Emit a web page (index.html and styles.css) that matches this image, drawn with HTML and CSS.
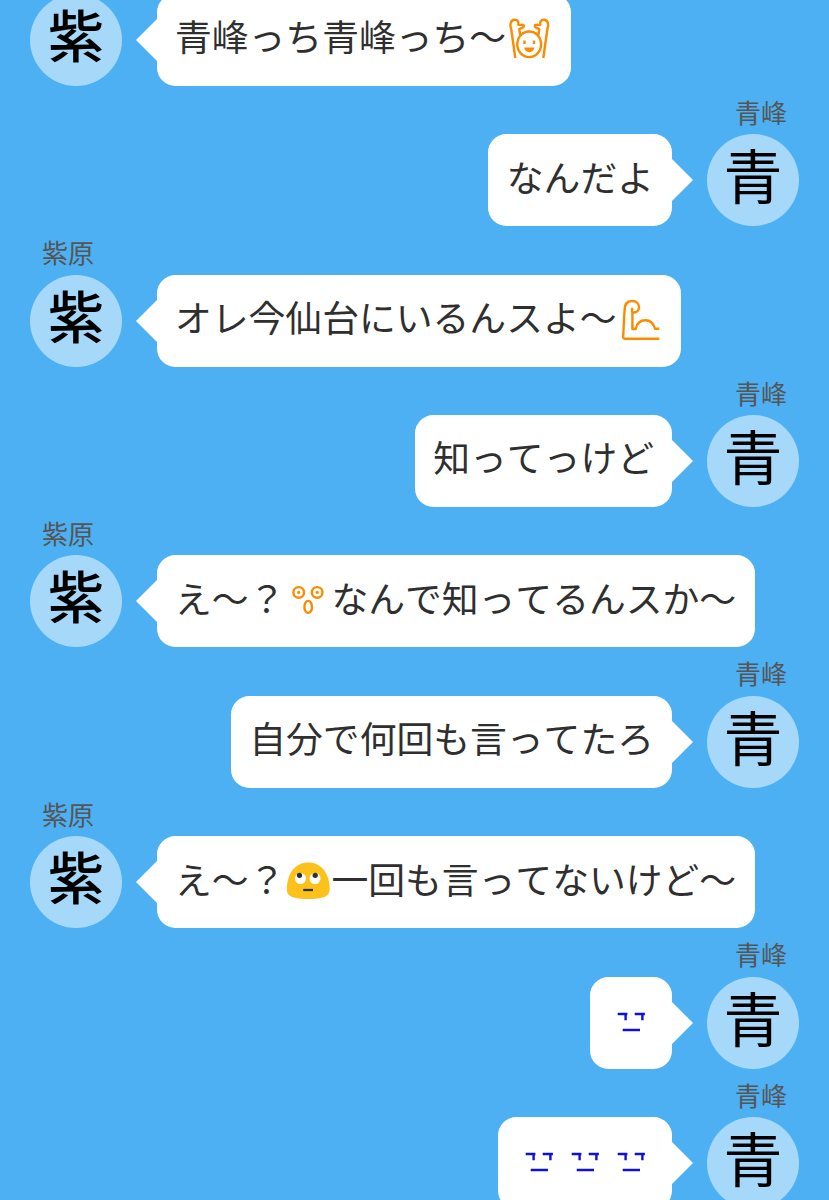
FILE: index.html
```html
<!DOCTYPE html>
<html lang="ja">
<head>
    <meta charset="UTF-8">
    <meta name="viewport" content="width=device-width, initial-scale=1.0">
    <title>トーク</title>
    <link rel="stylesheet" href="styles.css">
</head>
<body>
    <!-- emoji shapes -->
    <svg class="defs">
        <symbol id="hands-up" viewBox="0 0 46 46">
            <g class="line orange">
                <ellipse cx="23.2" cy="27.3" rx="11.9" ry="12.8"/>
                <path d="M9.3 41 5.2 12C3.5 8 4.5 2.9 8.5 2.7 11.5 2.5 13 4.5 12.3 7.5 13.5 8.6 15.5 7 17.8 8.3 18.5 10.5 15.5 11.3 13.3 12L14.3 18.5"/>
                <path d="M37.3 41 41.4 12C43.1 8 42.1 2.9 38.1 2.7 35.1 2.5 33.6 4.5 34.3 7.5 33.1 8.6 31.1 7 28.8 8.3 28.1 10.5 31.1 11.3 33.3 12L32.3 18.5"/>
                <path d="M18.5 23.5v3.5M28 23.5v3.5"/>
            </g>
            <path class="solid orange" d="M18.3 30.5h10a5 4.7 0 0 1-10 0z"/>
        </symbol>
        <symbol id="muscle" viewBox="0 0 46 46">
            <path class="line orange" d="M42.3 40.7H8.3Q6 40.7 6.2 38.3L7.5 13C7.5 6 10.5 3 15 3c4.500 0 7 2.800 7 6 0 3.500-2.500 5.500-5 5.500-2 0-3-2-1.300-4.500M15.400 13.500V31h3.300C20 25 24 22.300 28.300 22.300S36.500 25 38 30.800h4.300"/>
        </symbol>
        <symbol id="astonished" viewBox="0 0 46 46">
            <g class="line orange">
                <circle cx="13.7" cy="14.4" r="5.3"/>
                <circle cx="32.2" cy="14.4" r="5.3"/>
                <ellipse cx="23.2" cy="28.9" rx="3.8" ry="6"/>
            </g>
            <g class="solid orange">
                <circle cx="13.7" cy="14.4" r="1.6"/>
                <circle cx="32.2" cy="14.4" r="1.6"/>
            </g>
        </symbol>
        <symbol id="rolling-eyes" viewBox="0 0 46 46">
            <path fill="#fcc21b" d="M23.2 3.4C36 3.4 44.7 14 44.7 30.5 44.7 37.5 38 40 23.2 40S1.8 37.5 1.8 30.5C1.8 14 10.5 3.4 23.2 3.4z"/>
            <circle cx="15.5" cy="19.5" r="5.5" fill="#fff"/>
            <circle cx="30" cy="19.5" r="5.5" fill="#fff"/>
            <circle cx="14.5" cy="16.3" r="2.6" fill="#2f2f2f"/>
            <circle cx="30.2" cy="16.3" r="2.6" fill="#2f2f2f"/>
            <path d="M18.2 31H28" stroke="#2f2f2f" stroke-width="2.3"/>
        </symbol>
        <symbol id="deadpan" viewBox="0 0 46 46">
            <path class="line blue" d="M9.7 14h9.7M17.6 14v6.200M26.700 14h10.200M34.400 14v6.200M14.700 30H32"/>
        </symbol>
    </svg>

    <div class="chat">
        <div class="message left">
            <div class="row">
                <div class="avatar">紫</div>
                <div class="bubble">青峰っち青峰っち〜<svg class="emoji"><use href="#hands-up"/></svg></div>
            </div>
        </div>
        <div class="message right">
            <div class="name">青峰</div>
            <div class="row">
                <div class="avatar">青</div>
                <div class="bubble">なんだよ</div>
            </div>
        </div>
        <div class="message left">
            <div class="name">紫原</div>
            <div class="row">
                <div class="avatar">紫</div>
                <div class="bubble">オレ今仙台にいるんスよ〜<svg class="emoji"><use href="#muscle"/></svg></div>
            </div>
        </div>
        <div class="message right">
            <div class="name">青峰</div>
            <div class="row">
                <div class="avatar">青</div>
                <div class="bubble">知ってっけど</div>
            </div>
        </div>
        <div class="message left">
            <div class="name">紫原</div>
            <div class="row">
                <div class="avatar">紫</div>
                <div class="bubble">え〜？<svg class="emoji"><use href="#astonished"/></svg>なんで知ってるんスか〜</div>
            </div>
        </div>
        <div class="message right">
            <div class="name">青峰</div>
            <div class="row">
                <div class="avatar">青</div>
                <div class="bubble">自分で何回も言ってたろ</div>
            </div>
        </div>
        <div class="message left">
            <div class="name">紫原</div>
            <div class="row">
                <div class="avatar">紫</div>
                <div class="bubble">え〜？<svg class="emoji"><use href="#rolling-eyes"/></svg>一回も言ってないけど〜</div>
            </div>
        </div>
        <div class="message right">
            <div class="name">青峰</div>
            <div class="row">
                <div class="avatar">青</div>
                <div class="bubble"><svg class="emoji"><use href="#deadpan"/></svg></div>
            </div>
        </div>
        <div class="message right">
            <div class="name">青峰</div>
            <div class="row">
                <div class="avatar">青</div>
                <div class="bubble"><svg class="emoji"><use href="#deadpan"/></svg><svg class="emoji"><use href="#deadpan"/></svg><svg class="emoji"><use href="#deadpan"/></svg></div>
            </div>
        </div>
    </div>
</body>
</html>
```
FILE: styles.css
```css
:root {
    --bg-color: #4cb0f2;
    --avatar-bg: #a5d8f9;
    --text-color: #2f2f2f;
}

body {
    margin: 0;
    height: 1200px;
    overflow: hidden;
    background: var(--bg-color);
    color: var(--text-color);
    font-family: "Noto Sans CJK JP", sans-serif;
    font-kerning: none;
}

.defs {
    display: none;
}

/* scrolled down to the latest messages */
.chat {
    margin-top: -6.2px;
    padding: 0 30px;
}

.name {
    height: 35.4px;
    padding: 13px 12px 0;
    font-size: 26px;
    line-height: 26px;
    color: #555;
}

.row {
    display: flex;
    gap: 34.6px;
}

.right .name {
    text-align: right;
}

.right .row {
    flex-direction: row-reverse;
}

.avatar {
    width: 92px;
    height: 92px;
    border-radius: 50%;
    background: var(--avatar-bg);
    color: #000;
    font-size: 56px;
    font-weight: 500;
    line-height: 77px;
    text-align: center;
}

.right .avatar {
    font-size: 59px;
    font-weight: 400;
    line-height: 79px;
}

/* Bubbles */
.bubble {
    position: relative;
    display: flex;
    align-items: center;
    box-sizing: border-box;
    height: 92px;
    padding: 0 18.4px 9px;
    border-radius: 18.4px;
    background: #fff;
    font-size: 36.8px;
    line-height: 46px;
    white-space: nowrap;
}

.bubble::before {
    content: "";
    position: absolute;
    top: 25px;
    border: 21px solid transparent;
}

.left .bubble::before {
    right: 100%;
    border-left-width: 0;
    border-right-color: #fff;
}

.right .bubble::before {
    left: 100%;
    border-right-width: 0;
    border-left-color: #fff;
}

/* Emoji */
.emoji {
    flex: none;
    width: 46px;
    height: 46px;
    margin-top: 9px;
}

.line {
    fill: none;
    stroke-width: 2.4;
    stroke-linejoin: round;
}

.line.orange {
    stroke: #fb8c00;
}

.line.blue {
    stroke: #1010d8;
}

.solid.orange {
    fill: #fb8c00;
}
```
